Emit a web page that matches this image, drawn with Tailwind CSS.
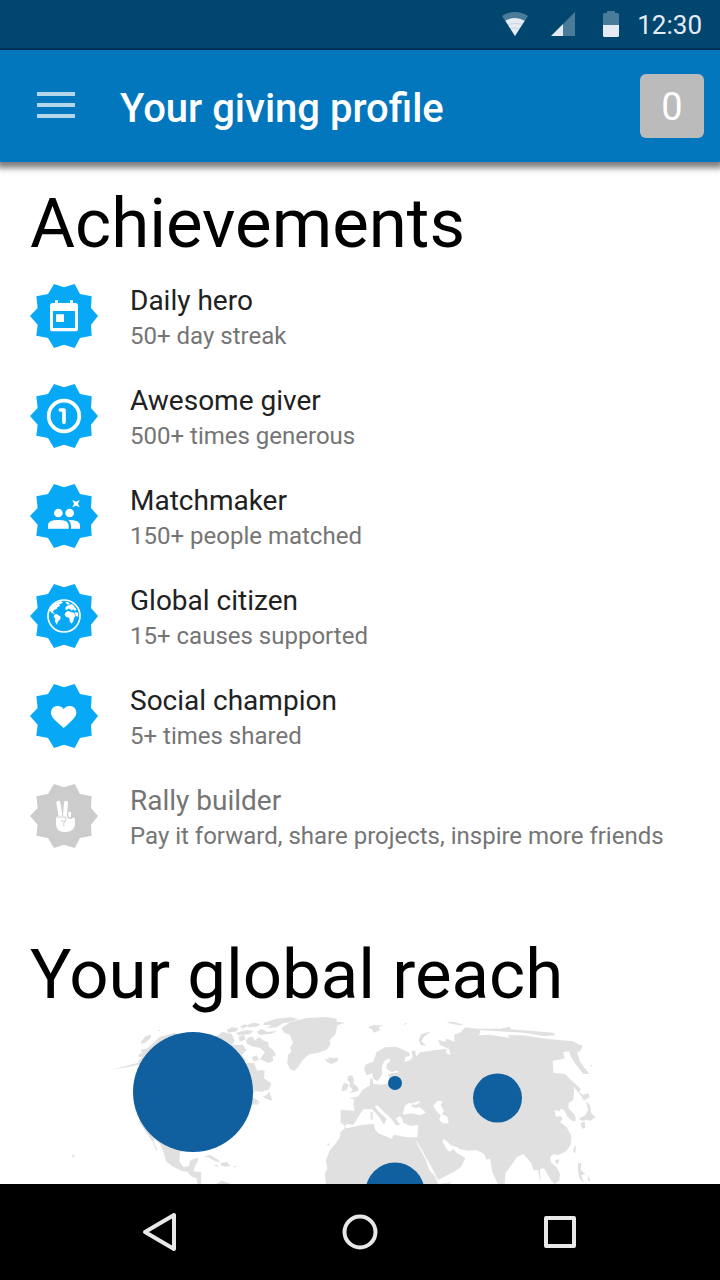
<!DOCTYPE html>
<html lang="en">
<head>
<meta charset="utf-8">
<meta name="viewport" content="width=device-width, initial-scale=1">
<title>Your giving profile</title>
<script src="https://cdn.jsdelivr.net/npm/@tailwindcss/browser@4"></script>
</head>
<body class="flex h-screen flex-col overflow-hidden bg-white font-['Roboto',sans-serif] text-black">

<svg class="hidden" aria-hidden="true">
  <symbol id="badge" viewBox="30 30 204 192">
    <path fill="currentColor" d="M102 30 132 40 164 30 180 60 215 67 213 102 234 126 213 152 215 185 180 192 164 222 132 212 102 222 84 192 49 185 53 152 30 126 53 102 49 67 84 60Z"/>
  </symbol>
</svg>

<!-- Status bar -->
<div class="z-20 flex h-[50px] shrink-0 items-center justify-end border-b-2 border-[#002f55] bg-[#00466f] pr-[18px] text-[#e6ebf3]">
  <svg class="mr-[23px] h-6 w-[26px]" viewBox="0 0 78 72" fill="currentColor" role="img" aria-label="Wi-Fi">
    <path opacity=".32" d="M0 12Q39-12 78 12L39 72Z"/>
    <path d="M10 26Q39 10 68 26L39 72Z"/>
    <path d="M17 37Q39 31 61 37M24 51Q39 45 54 51" fill="none" stroke="#00466f" stroke-opacity=".2" stroke-width="2"/>
  </svg>
  <svg class="mr-7 h-6 w-6" viewBox="0 0 72 72" fill="currentColor" role="img" aria-label="Signal">
    <path opacity=".32" d="M72 0V72H36V36Z"/><path d="M36 36V72H0Z"/>
  </svg>
  <svg class="mr-[18px] h-[26px] w-4" viewBox="0 0 16 26" fill="currentColor" role="img" aria-label="Battery">
    <path opacity=".32" d="M4 0H12V2H15L16 3V14H0V3L1 2H4Z"/><path d="M0 14H16V25L15 26H1L0 25Z"/>
  </svg>
  <time class="pt-0.5 text-[26px] leading-8">12:30</time>
</div>

<!-- App bar -->
<header class="z-10 flex h-28 shrink-0 items-center bg-[#0277bd] pr-4 pl-[37px] text-white shadow-[0_3px_6px_3px_rgba(0,0,0,0.5)]">
  <button type="button" aria-label="Open menu" class="mr-[45px] mb-[2px] flex h-[26px] w-[38px] flex-col justify-between">
    <span class="h-1 w-full bg-[#b3d6eb]"></span>
    <span class="h-1 w-full bg-[#b3d6eb]"></span>
    <span class="h-1 w-full bg-[#b3d6eb]"></span>
  </button>
  <h1 class="flex-1 pt-1.5 text-[40px] leading-12 font-medium">Your giving profile</h1>
  <button type="button" aria-label="Notifications: 0" class="size-16 rounded-md bg-[#bbb] pt-0.5 text-[38px] leading-none">0</button>
</header>

<main class="min-h-0 flex-1 overflow-hidden pt-[22px]">
  <section class="px-[30px]">
    <h2 class="mb-[2px] text-[69px] leading-20">Achievements</h2>
    <ul class="text-[#212121]">
      <li class="flex h-[100px] items-center gap-8">
        <svg class="h-16 w-[68px] shrink-0 text-[#07a9f7]" viewBox="30 30 204 192" aria-hidden="true">
          <use href="#badge" x="30" y="30" width="204" height="192"/>
          <path fill="#fff" fill-rule="evenodd" d="M105 79H114V87H150V79H159V87H166Q174 87 174 95V164Q174 172 166 172H98Q90 172 90 164V95Q90 87 98 87H105ZM99 111V162H165V111ZM108 121H132V144H108Z"/>
        </svg>
        <div class="pt-1"><h3 class="text-[28px] leading-9">Daily hero</h3><p class="text-[24px] leading-[34px] text-[#757575]">50+ day streak</p></div>
      </li>
      <li class="flex h-[100px] items-center gap-8">
        <svg class="h-16 w-[68px] shrink-0 text-[#07a9f7]" viewBox="30 30 204 192" aria-hidden="true">
          <use href="#badge" x="30" y="30" width="204" height="192"/>
          <circle cx="132" cy="126" r="46" fill="none" stroke="#fff" stroke-width="11"/>
          <path d="M121 108H132V145" fill="none" stroke="#fff" stroke-width="11" stroke-linecap="round" stroke-linejoin="round"/>
        </svg>
        <div class="pt-1"><h3 class="text-[28px] leading-9">Awesome giver</h3><p class="text-[24px] leading-[34px] text-[#757575]">500+ times generous</p></div>
      </li>
      <li class="flex h-[100px] items-center gap-8">
        <svg class="h-16 w-[68px] shrink-0 text-[#07a9f7]" viewBox="30 30 204 192" aria-hidden="true">
          <use href="#badge" x="30" y="30" width="204" height="192"/>
          <g fill="#fff">
            <circle cx="149" cy="117" r="13"/><circle cx="115" cy="117" r="13"/>
            <path d="M84 164V154Q84 138 115 138T146 154V164ZM145 138Q180 138 180 154V164H153V154Q153 144 145 138Z"/>
            <path d="M157 78 168 83 179 78 174 89 179 100 168 95 157 100 162 89Z"/>
          </g>
        </svg>
        <div class="pt-1"><h3 class="text-[28px] leading-9">Matchmaker</h3><p class="text-[24px] leading-[34px] text-[#757575]">150+ people matched</p></div>
      </li>
      <li class="flex h-[100px] items-center gap-8">
        <svg class="h-16 w-[68px] shrink-0 text-[#07a9f7]" viewBox="30 30 204 192" aria-hidden="true">
          <use href="#badge" x="30" y="30" width="204" height="192"/>
          <circle cx="132" cy="126" r="48" fill="none" stroke="#fff" stroke-width="5"/>
          <g fill="#fff" transform="translate(72 66)">
            <path d="M16 44 24 30 36 20 50 15 57 18 52 23 46 24 48 30 41 33 38 39 31 41 27 46 29 52 35 54 30 54 23 50 18 46Z"/>
            <path d="M31 56 38 54 50 62 49 70 43 75 38 86 33 76 34 68 29 62Z"/>
            <path d="M64 17 72 18 78 24 72 26 66 22ZM64 36 68 30 76 27 84 24 92 32 98 42 92 44 88 40 82 44 78 38 72 38 68 42 64 40Z"/>
            <path d="M64 50 72 44 80 48 90 50 95 60 90 66 88 76 82 83 77 76 76 66 66 62 62 56ZM92 48 102 50 103 62 96 60Z"/>
          </g>
        </svg>
        <div class="pt-1"><h3 class="text-[28px] leading-9">Global citizen</h3><p class="text-[24px] leading-[34px] text-[#757575]">15+ causes supported</p></div>
      </li>
      <li class="flex h-[100px] items-center gap-8">
        <svg class="h-16 w-[68px] shrink-0 text-[#07a9f7]" viewBox="30 30 204 192" aria-hidden="true">
          <use href="#badge" x="30" y="30" width="204" height="192"/>
          <path fill="#fff" d="M131 162 122 154C102 136 93 128 93 116 93 104 102 96 113 96 120 96 127 99 131 105 135 99 142 96 149 96 160 96 169 104 169 116 169 128 158 137 139 155Z"/>
        </svg>
        <div class="pt-1"><h3 class="text-[28px] leading-9">Social champion</h3><p class="text-[24px] leading-[34px] text-[#757575]">5+ times shared</p></div>
      </li>
      <li class="flex h-[100px] items-center gap-8 text-[#757575]">
        <svg class="h-16 w-[68px] shrink-0 text-[#ccc]" viewBox="30 30 204 192" aria-hidden="true">
          <use href="#badge" x="30" y="30" width="204" height="192"/>
          <g stroke="#fff" stroke-linecap="round" stroke-linejoin="round" fill="none">
            <path stroke-width="12" d="M115 86 121 122M138 86 135 122"/>
            <path stroke-width="9" d="M149 117V126M160 135V146"/>
          </g>
          <path fill="#fff" d="M108 132Q108 126 116 126H140Q144 136 154 134L165 141V154Q160 174 138 174H130Q108 172 108 150Z"/>
          <path fill="none" stroke="#ccc" stroke-width="3" stroke-linecap="round" stroke-linejoin="round" d="M109 129H136Q142 138 134 141H124M136 142Q128 146 132 156M143 118V130Q148 137 155 129V121"/>
        </svg>
        <div class="pt-1"><h3 class="text-[28px] leading-9">Rally builder</h3><p class="text-[24px] leading-[34px]">Pay it forward, share projects, inspire more friends</p></div>
      </li>
    </ul>
  </section>

  <section class="pt-[69px]">
    <h2 class="px-[30px] text-[69px] leading-20">Your global reach</h2>
    <svg class="w-full" viewBox="0 1015 720 200" role="img" aria-label="World map of your giving">
      <g fill="#e0e0e0">
        <!-- Americas and Greenland -->
        <g transform="translate(60 1000) scale(.33333)">
          <path d="M665 84 690 67 740 54 800 51 830 56 830 65 855 68 832 76 826 103 808 122 812 132 800 149 775 158 748 163 728 180 715 200 703 213 690 207 682 190 684 165 694 156 690 142 699 130 690 104 672 98Z"/>
          <path d="M795 177 806 179 805 172 820 174 834 173 834 183 815 192 800 186Z"/>
          <path d="M243 127 254 110 272 103 272 114 258 127 245 132ZM293 92 302 88 300 93ZM160 208 200 197 235 188 235 182 248 170 235 172 237 163 247 158 242 150 262 145 300 110 340 100 440 108 470 108 488 95 516 103 524 124 516 135 548 134 560 150 545 165 558 180 545 196 566 188 582 190 592 212 604 210 614 212 612 235 634 250 628 268 604 276 585 272 575 290 598 304 570 318 540 350 500 400 470 420 470 446 455 430 410 435 370 446 360 458 358 484 370 501 386 499 392 480 412 474 415 480 405 498 400 514 424 517 423 552 412 552 410 535 395 530 382 515 365 513 340 500 318 484 312 460 300 432 280 415 285 435 294 454 288 450 278 425 240 370 230 250 245 192 200 202Z"/>
          <path d="M500 90 515 82 535 84 530 94 505 98ZM540 80 555 73 565 77 548 86ZM562 75 580 68 602 72 590 80 565 82ZM612 68 650 56 690 52 716 57 690 66 668 70 650 82 620 85 635 76 610 75ZM530 98 560 90 580 93 570 102 534 106ZM590 96 604 86 622 96 650 93 635 101 600 105ZM535 110 552 104 557 118 540 125ZM557 122 566 112 580 110 583 122 598 112 612 122 624 126 626 140 640 150 648 165 638 170 640 182 625 190 612 182 600 178 608 166 614 157 600 143 580 140 562 132ZM576 172 590 165 597 180 580 184ZM608 290 622 284 626 273 634 290 636 302 620 297ZM578 312 602 306 590 314ZM430 470 450 465 472 478 482 488 464 483 445 472ZM483 488 500 486 512 498 494 500 482 495ZM460 494 474 495 472 501ZM518 498 528 499 524 503ZM468 552 486 542 508 550 512 552ZM36 465 43 464 43 471 38 473Z"/>
        </g>
        <!-- Europe, Africa and Asia -->
        <g transform="translate(310 1000) scale(.33333)">
          <path d="M92 330 134 332 130 315 132 298 118 295 145 289 157 270 180 256 180 238 187 234 190 252 215 254 240 250 235 222 264 217 264 212 244 216 230 207 230 192 240 185 238 175 222 184 215 202 216 224 203 243 190 236 187 220 170 226 162 206 168 193 190 185 200 156 225 142 260 140 298 158 300 167 285 172 284 185 302 180 308 170 304 154 316 151 318 170 330 157 350 154 378 150 410 146 408 160 422 164 418 148 390 135 384 119 405 126 410 116 420 120 434 125 432 104 450 98 466 82 505 87 512 96 506 106 540 104 600 114 592 106 640 106 720 118 790 124 800 130 818 138 812 152 802 158 810 185 838 222 820 222 795 190 784 172 777 154 760 156 764 176 728 182 730 218 765 222 786 245 792 270 790 300 776 310 775 325 795 345 798 362 788 364 772 350 762 330 752 326 750 334 733 330 738 350 752 348 758 356 750 366 770 382 784 408 782 434 768 454 744 466 732 462 720 472 724 488 740 502 750 522 748 542 735 552 724 542 712 522 704 508 698 504 690 508 692 552 684 510 670 510 664 490 640 462 620 472 608 490 586 520 584 552 564 552 548 520 540 475 530 480 522 462 500 450 476 452 450 448 440 440 426 438 410 424 400 416 398 426 412 450 420 455 430 446 440 458 466 474 454 500 432 515 384 540 374 520 356 486 324 430 316 420 330 448 348 480 358 510 376 530 384 552H48L44 520 52 508 48 480 60 450 76 432 90 410 92 396 108 382 96 370 92 372ZM114 384 160 374 192 372 195 388 205 400 244 416 252 404 290 412 322 412 325 375 300 378 280 368 276 355 268 348 258 356 270 374 258 376 242 354 220 334 202 316 194 318 205 334 230 356 222 374 205 348 186 328 160 328 144 352 130 374 110 372 102 384Z"/>
          <path d="M114 228 127 226 132 240 130 250 144 262 146 272 120 280 128 268 118 260 120 248 112 240ZM98 256 104 248 116 254 110 270 94 274ZM174 82 190 76 222 76 206 82 210 90 192 98 186 88ZM280 72 292 68 286 74ZM326 120 334 102 364 94 342 110 334 124 350 138 332 134ZM410 64 432 66 462 74 446 76 418 70ZM500 86 570 86 600 80 602 88 730 98 736 106 700 108 640 98 505 90ZM764 222 790 246 812 266 808 278 820 284 836 280 838 292 822 302 814 288 790 260ZM828 304 840 316 844 340 856 352 842 362 830 360 816 362 806 356 826 346 834 330ZM812 370 824 364 826 384 816 386ZM792 440 798 438 796 460 790 456ZM736 480 748 478 744 492 736 490ZM804 488 814 490 812 510 826 522 814 526 822 548 808 535 804 512ZM834 525 842 544 834 542ZM50 432 60 430 56 437ZM384 552 426 547 418 552ZM182 336 188 335 188 360 182 358ZM840 196 848 194 844 200Z"/>
          <path fill="#fff" d="M278 344 284 318 298 308 310 312 302 318 316 324 330 322 348 338 330 346 304 340ZM370 318 382 303 398 304 392 316 402 332 396 342 412 350 416 370 398 370 388 360 392 346 378 332Z"/>
          <path fill="#fff" d="M306 310 326 303 330 307 316 316Z"/>
        </g>
      </g>
      <g fill="#1060a0">
        <circle cx="193" cy="1092" r="60"/>
        <circle cx="395" cy="1083" r="7"/>
        <circle cx="497.500" cy="1098" r="24.500"/>
        <circle cx="395" cy="1192" r="29.500"/>
      </g>
    </svg>
  </section>
</main>

<!-- System navigation -->
<nav aria-label="System" class="z-10 flex h-24 shrink-0 items-center justify-center gap-[136px] bg-black text-[#e8e8e8]">
  <button type="button" aria-label="Back" class="size-16">
    <svg viewBox="0 0 64 64" fill="none" stroke="currentColor" stroke-width="4" stroke-linejoin="round"><path d="M46 15V49L17 32Z"/></svg>
  </button>
  <button type="button" aria-label="Home" class="size-16">
    <svg viewBox="0 0 64 64" fill="none" stroke="currentColor" stroke-width="4"><circle cx="32" cy="32" r="15.500"/></svg>
  </button>
  <button type="button" aria-label="Recent apps" class="size-16">
    <svg viewBox="0 0 64 64" fill="none" stroke="currentColor" stroke-width="4" stroke-linejoin="round"><path d="M18 18H46V46H18Z"/></svg>
  </button>
</nav>
</body>
</html>
